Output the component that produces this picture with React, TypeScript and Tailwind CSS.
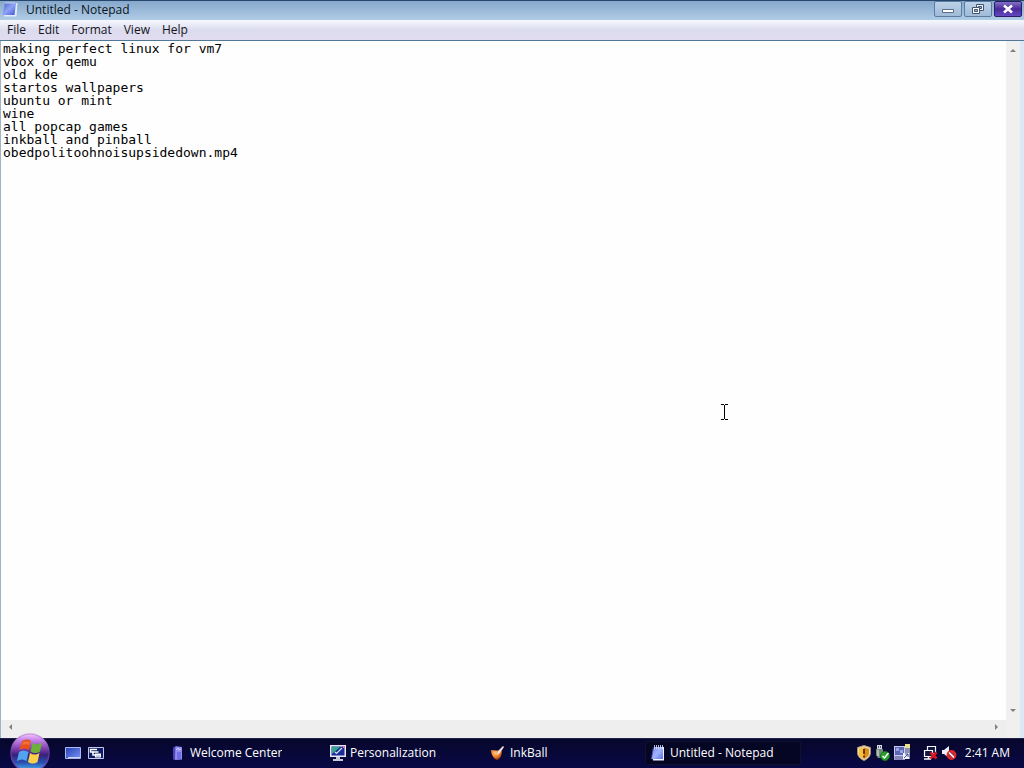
import React, { useState } from "react";

const initialText = `making perfect linux for vm7
vbox or qemu
old kde
startos wallpapers
ubuntu or mint
wine
all popcap games
inkball and pinball
obedpolitoohnoisupsidedown.mp4`;

const menus = ["File", "Edit", "Format", "View", "Help"];

function NotepadIcon() {
  return (
    <svg width="16" height="16" viewBox="0 0 16 16" aria-hidden="true">
      <defs>
        <linearGradient id="note" x1="0" y1="0" x2="1" y2="1">
          <stop offset="0" stopColor="#4a5ed0" />
          <stop offset="0.5" stopColor="#90a4f4" />
          <stop offset="1" stopColor="#3c50d4" />
        </linearGradient>
      </defs>
      <path d="M4 2h11.500l-1 13.500H2z" fill="#e4eafc" />
      <path d="M3 2h11l-1.500 12H0.500z" fill="url(#note)" />
      <path d="M4 1v2M6 1v2M8 1v2M10 1v2M12 1v2" stroke="#d8defa" strokeWidth="0.800" />
    </svg>
  );
}

function NotepadTaskIcon() {
  return (
    <svg width="16" height="16" viewBox="0 0 16 16" aria-hidden="true">
      <defs>
        <linearGradient id="noteTask" x1="0" y1="0" x2="1" y2="1">
          <stop offset="0" stopColor="#7c8cf0" />
          <stop offset="0.5" stopColor="#a0b4fc" />
          <stop offset="1" stopColor="#5c70e4" />
        </linearGradient>
      </defs>
      <path d="M3 2L1 14l4 1z" fill="#4c58c4" />
      <path d="M4 2h10v13.500H3z" fill="#f0f4ff" />
      <path d="M4 2h9v12H2z" fill="url(#noteTask)" />
      <path d="M4.500 0v4M6.500 0v4M8.500 0v4M10.500 0v4M12.500 0v4" stroke="#dfe5ff" strokeWidth="0.800" />
    </svg>
  );
}

function WelcomeIcon() {
  return (
    <svg width="16" height="16" viewBox="0 0 16 16" aria-hidden="true">
      <path d="M3 3l3-2 6 1v12l-6 1-3-1z" fill="#7470e6" />
      <path d="M6 2l6 0v12.500H5z" fill="#8f8cf5" />
      <path d="M3 3l2-1v13l-2-1z" fill="#4c43b4" />
      <path d="M6 5l2-2 1 2 2-1" stroke="#d3d0ff" fill="none" />
      <path d="M7 7h4v7H7z" fill="#716ee8" />
    </svg>
  );
}

function PersonalizationIcon() {
  return (
    <svg width="16" height="16" viewBox="0 0 16 16" aria-hidden="true">
      <path d="M0 0h16v12H0z" fill="#e6e8f6" />
      <path d="M1.500 1.500h13v9h-13z" fill="#1c2b9c" />
      <path d="M2 2h8L2 9z" fill="#35a88c" />
      <path d="M5 7l1.500 1.500L12 3" fill="none" stroke="#bfeee2" strokeWidth="1.200" />
      <path d="M13 1h2v2h-2z" fill="#e36bc4" />
      <path d="M6 12h4v2h3v2H3v-2h3z" fill="#c6c8d8" />
    </svg>
  );
}

function InkBallIcon() {
  return (
    <svg width="16" height="16" viewBox="0 0 16 16" aria-hidden="true">
      <defs>
        <radialGradient id="ink" cx="0.4" cy="0.3" r="0.75">
          <stop offset="0" stopColor="#ffc48c" />
          <stop offset="0.5" stopColor="#f08028" />
          <stop offset="1" stopColor="#7c2808" />
        </radialGradient>
      </defs>
      <path d="M1 5l11 1c0 4-2 8-5 9-3-1-6-5-6-10z" fill="url(#ink)" />
      <path d="M7 10l1-4 5-5 1 1-4 6z" fill="#f2e4d9" />
    </svg>
  );
}

function StartOrb() {
  return (
    <svg width="42" height="42" viewBox="0 0 42 42" aria-hidden="true">
      <defs>
        <linearGradient id="orb" x1="0" y1="0" x2="0" y2="1">
          <stop offset="0" stopColor="#f4c4fc" />
          <stop offset="0.18" stopColor="#c07ce8" />
          <stop offset="0.4" stopColor="#7c3ca8" />
          <stop offset="0.55" stopColor="#382078" />
          <stop offset="0.75" stopColor="#2850b0" />
          <stop offset="1" stopColor="#50c4fc" />
        </linearGradient>
        <linearGradient id="orbRim" x1="0" y1="0" x2="0" y2="1">
          <stop offset="0" stopColor="#d0a0e0" />
          <stop offset="0.5" stopColor="#5c309c" />
          <stop offset="1" stopColor="#6c58c0" />
        </linearGradient>
      </defs>
      <circle cx="21" cy="21" r="19" fill="url(#orb)" stroke="url(#orbRim)" strokeWidth="1.500" />
      <path d="M13 9c3-2 6.500-2 9 0l-2 9c-3-2-6-2-9.500 0z" fill="#e8501c" />
      <path d="M23.500 11c3 2 6 1.500 9.500-0.500l-2 9c-3 2-6 2-9.500 0z" fill="#6cb038" />
      <path d="M10 20c3-2 6-2 9.500 0l-2 9c-3-2-6-2-9.500 0z" fill="#50a4f0" />
      <path d="M21 21c3 2 6 2 9.500 0l-2 9c-3 2-6 2-9.500 0z" fill="#fcd048" />
      <path d="M14 10c2-1 5-1 7 0l-1 3c-2-1-4-1-7 0z" fill="#f89058" opacity="0.5" />
    </svg>
  );
}

function DesktopIcon() {
  return (
    <svg width="16" height="14" viewBox="0 0 16 14" aria-hidden="true">
      <defs>
        <linearGradient id="desk" x1="0" y1="0" x2="1" y2="1">
          <stop offset="0" stopColor="#2440b8" />
          <stop offset="1" stopColor="#7c92f2" />
        </linearGradient>
      </defs>
      <path d="M0.500 1.500h15v11h-15z" fill="url(#desk)" stroke="#a8baf4" />
      <path d="M1 11.500h14" stroke="#c8d4fc" />
      <path d="M1 11.500h2" stroke="#4058c0" />
    </svg>
  );
}

function SwitcherIcon() {
  return (
    <svg width="16" height="14" viewBox="0 0 16 14" aria-hidden="true">
      <path d="M0.500 1.500h15v11h-15z" fill="#101c66" stroke="#c0c8ee" />
      <path d="M2 3.500h7M2.500 3v3h3" fill="none" stroke="#fff" strokeWidth="1.500" />
      <path d="M4.500 6h6M5 6v3h3" fill="none" stroke="#fff" strokeWidth="1.500" />
      <path d="M7 7.500h6v4H7z" fill="#fff" />
      <path d="M8 9.500h4v1H8z" fill="#8c9cd8" />
    </svg>
  );
}

function ShieldIcon() {
  return (
    <svg width="14" height="16" viewBox="0 0 14 16" aria-hidden="true">
      <path d="M7 0.500l6.500 2v5c0 4-3 6.500-6.500 8C3.500 14 0.500 11.500 0.500 7.500v-5z" fill="#e8dcc0" stroke="#a89468" />
      <path d="M7 2.500L12 4v4c0 3-2 4.500-5 6-3-1.500-5-3-5-6V4z" fill="#e08c10" />
      <path d="M7 2.500L2 4v4c0 3 2 4.500 5 6z" fill="#fcc038" />
      <path d="M7 4v5M7 10.500v2" stroke="#503008" strokeWidth="1.800" />
    </svg>
  );
}

function SafeRemoveIcon() {
  return (
    <svg width="15" height="16" viewBox="0 0 15 16" aria-hidden="true">
      <path d="M2 0h5v4H2z" fill="#d8dce0" />
      <path d="M3 1h1v2H3zM5 1h1v2H5z" fill="#585c78" />
      <path d="M1 4h7v6l-2 3H3l-2-3z" fill="#74877c" />
      <path d="M2 5h2v6H2z" fill="#b4c0b6" />
      <circle cx="10" cy="11" r="4.500" fill="#299f2b" stroke="#147818" />
      <path d="M7.500 11l2 2 4-5" stroke="#fff" strokeWidth="1.500" fill="none" />
    </svg>
  );
}

function MachineIcon() {
  return (
    <svg width="17" height="17" viewBox="0 0 17 17" aria-hidden="true">
      <path d="M0 2h11v10H0z" fill="#c8ccec" />
      <path d="M1 3h9v8H1z" fill="#5c64b4" />
      <path d="M2 4h3v3H2zM6 6h3v3H6z" fill="#98a4e4" />
      <path d="M0 12h11v4H0z" fill="#a4a4d0" />
      <path d="M1 13h8M1 15h8" stroke="#6766a0" />
      <path d="M11 3h5v12h-5z" fill="#8c90ac" />
      <path d="M11 0h5v4h-5z" fill="#ece088" />
      <path d="M9 9h6v6H9z" fill="#f5f5fc" />
      <path d="M10 14l4-4M11 10h3v3" stroke="#4144a0" fill="none" />
    </svg>
  );
}

function NetworkIcon() {
  return (
    <svg width="15" height="16" viewBox="0 0 15 16" aria-hidden="true">
      <path d="M4.500 1.500h8v7h-8z" fill="#101540" stroke="#f4f4fa" strokeWidth="1.200" />
      <path d="M1.500 5.500h8v6h-8z" fill="#171a49" stroke="#fff" strokeWidth="1.200" />
      <path d="M1 14h7M5.500 12v2" stroke="#fff" strokeWidth="1.500" />
      <path d="M7.500 7.500l6 6M13.500 7.500l-6 6" stroke="#d81820" strokeWidth="2.500" />
    </svg>
  );
}

function MutedIcon() {
  return (
    <svg width="15" height="16" viewBox="0 0 15 16" aria-hidden="true">
      <path d="M0 5h2l5-4v12l-5-4H0z" fill="#edf0f8" />
      <circle cx="9.500" cy="10" r="4" fill="#b8343c" stroke="#e42429" strokeWidth="1.800" />
      <path d="M7 7.500l5 5" stroke="#fff" strokeWidth="1.500" />
    </svg>
  );
}

function Arrow({ d }: { d: string }) {
  return (
    <svg className="size-2" viewBox="0 0 8 8" aria-hidden="true">
      <path d={d} fill="#808080" />
    </svg>
  );
}

const tasks = [
  { name: "Welcome Center", Icon: WelcomeIcon, active: false },
  { name: "Personalization", Icon: PersonalizationIcon, active: false },
  { name: "InkBall", Icon: InkBallIcon, active: false },
  { name: "Untitled - Notepad", Icon: NotepadTaskIcon, active: true },
];

function TitleBar() {
  return (
    <header className="flex h-5 shrink-0 items-start border-t border-[#27466b] bg-linear-to-b from-[#86a8cb] to-[#b0cce6] pr-0.5 pl-0.5">
      <NotepadIcon />
      <h1 className="ml-2 flex-1 text-xs leading-[18px] text-[#0a1420]">Untitled - Notepad</h1>
      <div className="flex gap-0.5">
        <button aria-label="Minimize" className="flex h-4 w-7 items-center justify-center rounded-xs border border-[#5c7ba0] bg-linear-to-b from-[#bdd2e8] to-[#9ebbd8] pt-1">
          <svg width="12" height="6" viewBox="0 0 12 6"><path d="M0.500 1.500h11v3h-11z" fill="#fff" stroke="#5c6c84" /></svg>
        </button>
        <button aria-label="Restore" className="flex h-4 w-7 items-center justify-center rounded-xs border border-[#5c7ba0] bg-linear-to-b from-[#bdd2e8] to-[#9ebbd8]">
          <svg width="12" height="12" viewBox="0 0 12 12">
            <path d="M4.500 1.500h7v6h-7z" fill="#e8f0f8" stroke="#43546c" />
            <path d="M6.500 3.500h3v2h-3z" fill="#9ebbd8" stroke="#43546c" />
            <path d="M0.500 4.500h7v6h-7z" fill="#fff" stroke="#43546c" />
            <path d="M2.500 6.500h3v2h-3z" fill="#9ebbd8" stroke="#43546c" />
          </svg>
        </button>
        <button aria-label="Close" className="flex h-4 w-7 items-center justify-center rounded-xs border border-[#2c1c68] bg-linear-to-b from-[#8470c4] via-[#49289c] to-[#6548c0]">
          <svg width="12" height="10" viewBox="0 0 12 10"><path d="M2 1.500l8 7M10 1.500l-8 7" stroke="#fff" strokeWidth="2.500" /></svg>
        </button>
      </div>
    </header>
  );
}

function MenuBar() {
  return (
    <nav className="flex h-[21px] shrink-0 border-b border-[#4e7896] bg-linear-to-b from-[#f6f8fd] via-[#dcdcee] to-[#e2dcf0] pl-px">
      {menus.map((menu) => (
        <button key={menu} className="px-1.5 text-xs leading-5 text-[#141420]">
          {menu}
        </button>
      ))}
    </nav>
  );
}

function Editor() {
  const [text, setText] = useState(initialText);
  return (
    <main className="flex min-h-0 flex-1 border-r-4 border-l border-r-[#dbe9f7] border-l-[#9fb4c8]">
      <div className="flex min-w-0 flex-1 flex-col">
        <textarea
          aria-label="Document text"
          wrap="off"
          spellCheck={false}
          value={text}
          onChange={(event) => setText(event.target.value)}
          className="min-h-0 flex-1 resize-none overflow-hidden bg-[#fefefe] px-0.5 py-px font-['DejaVu_Sans_Mono',monospace] text-[13px] leading-[13px] text-black outline-none"
        />
        <div className="flex h-[18px] shrink-0 items-center justify-between bg-[#eeeeee] px-1.5 pb-1">
          <button aria-label="Scroll left"><Arrow d="M5 1v6L2 4z" /></button>
          <button aria-label="Scroll right"><Arrow d="M3 1v6l3-3z" /></button>
        </div>
      </div>
      <div className="flex w-3.5 shrink-0 flex-col items-center justify-between bg-[#f0f0ee] pt-1.5 pb-6">
        <button aria-label="Scroll up"><Arrow d="M1 5h6L4 2z" /></button>
        <button aria-label="Scroll down"><Arrow d="M1 3h6L4 6z" /></button>
      </div>
    </main>
  );
}

function Taskbar() {
  return (
    <footer className="flex h-[30px] shrink-0 items-center border-t border-[#20204c] bg-linear-to-b from-[#07072c] to-[#080846] pb-0.5 text-white">
      <button aria-label="Start" className="z-10 -my-1.5 ml-[9px] shrink-0">
        <StartOrb />
      </button>
      <div className="ml-3.5 flex shrink-0 gap-[7px]">
        <button aria-label="Show desktop"><DesktopIcon /></button>
        <button aria-label="Switch between windows"><SwitcherIcon /></button>
      </div>
      <div className="ml-[61px] flex min-w-0 flex-1 gap-1">
        {tasks.map(({ name, Icon, active }) => (
          <button
            key={name}
            className={
              active
                ? "flex h-6 w-39 min-w-0 items-center gap-1 rounded-xs border border-[#11112c] bg-[#050524] pl-1 text-xs"
                : "flex h-6 w-39 min-w-0 items-center gap-1 rounded-xs border border-transparent pl-1 text-xs"
            }
          >
            <Icon />
            <span className="truncate">{name}</span>
          </button>
        ))}
      </div>
      <div className="flex shrink-0 items-center gap-1 pr-3.5">
        <ShieldIcon />
        <SafeRemoveIcon />
        <MachineIcon />
        <span className="ml-2"><NetworkIcon /></span>
        <MutedIcon />
        <time className="ml-1 text-xs">2:41 AM</time>
      </div>
    </footer>
  );
}

export default function App() {
  return (
    <div className="relative flex h-screen flex-col overflow-hidden bg-white font-['Open_Sans','Noto_Sans',sans-serif]">
      <TitleBar />
      <MenuBar />
      <Editor />
      <Taskbar />
      <svg className="pointer-events-none absolute top-[404px] left-[721px]" width="7" height="16" viewBox="0 0 7 16" aria-hidden="true">
        <path d="M0 0.500h3M4 0.500h3M0 15.500h3M4 15.500h3M3.500 1v14" stroke="#000" />
      </svg>
    </div>
  );
}
